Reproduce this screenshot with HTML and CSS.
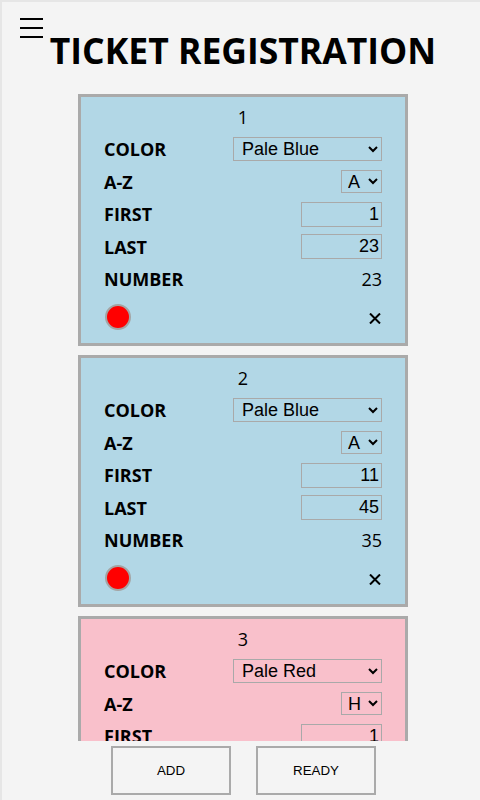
FILE: index.html
```html
<!DOCTYPE html>
<html lang="en">
<head>
<meta charset="utf-8">
<title>Ticket Registration</title>
<link rel="stylesheet" href="styles.css">
</head>
<body>
<div class="app">
  <header class="head">
    <button class="menu" aria-label="Menu">
      <svg width="23" height="20" viewBox="0 0 23 20"><rect x="0" y="0" width="23" height="2"/><rect x="0" y="9" width="23" height="2"/><rect x="0" y="18" width="23" height="2"/></svg>
    </button>
    <h1 class="title">TICKET REGISTRATION</h1>
  </header>
  <main class="list">
    <div class="card blue">
      <div class="num">1</div>
      <div class="row"><span class="label">COLOR</span><select class="sel sel-color"><option selected>Pale Blue</option><option>Pale Red</option></select></div>
      <div class="row"><span class="label">A-Z</span><select class="sel sel-az"><option selected>A</option><option>H</option></select></div>
      <div class="row"><span class="label">FIRST</span><input class="inp" type="text" value="1"></div>
      <div class="row"><span class="label">LAST</span><input class="inp" type="text" value="23"></div>
      <div class="row"><span class="label">NUMBER</span><span class="val">23</span></div>
      <div class="foot"><span class="dot"></span><svg class="close" width="12" height="11" viewBox="0 0 12 11"><path d="M1 0.5 L11 10.5 M11 0.5 L1 10.5" stroke="#000" stroke-width="2"/></svg></div>
    </div>
    <div class="card blue">
      <div class="num">2</div>
      <div class="row"><span class="label">COLOR</span><select class="sel sel-color"><option selected>Pale Blue</option><option>Pale Red</option></select></div>
      <div class="row"><span class="label">A-Z</span><select class="sel sel-az"><option selected>A</option><option>H</option></select></div>
      <div class="row"><span class="label">FIRST</span><input class="inp" type="text" value="11"></div>
      <div class="row"><span class="label">LAST</span><input class="inp" type="text" value="45"></div>
      <div class="row"><span class="label">NUMBER</span><span class="val">35</span></div>
      <div class="foot"><span class="dot"></span><svg class="close" width="12" height="11" viewBox="0 0 12 11"><path d="M1 0.5 L11 10.5 M11 0.5 L1 10.5" stroke="#000" stroke-width="2"/></svg></div>
    </div>
    <div class="card red">
      <div class="num">3</div>
      <div class="row"><span class="label">COLOR</span><select class="sel sel-color"><option>Pale Blue</option><option selected>Pale Red</option></select></div>
      <div class="row"><span class="label">A-Z</span><select class="sel sel-az"><option>A</option><option selected>H</option></select></div>
      <div class="row"><span class="label">FIRST</span><input class="inp" type="text" value="1"></div>
      <div class="row"><span class="label">LAST</span><input class="inp" type="text" value="10"></div>
      <div class="row"><span class="label">NUMBER</span><span class="val">10</span></div>
      <div class="foot"><span class="dot"></span><svg class="close" width="12" height="11" viewBox="0 0 12 11"><path d="M1 0.5 L11 10.5 M11 0.5 L1 10.5" stroke="#000" stroke-width="2"/></svg></div>
    </div>
  </main>
  <footer class="bar">
    <button class="btn">ADD</button>
    <button class="btn">READY</button>
  </footer>
</div>
</body>
</html>
```
FILE: styles.css
```css
html {
  background: #f4f4f4;
}
body {
  margin: 0;
  font-family: "Open Sans", "Noto Sans", sans-serif;
  color: #000;
}
.app {
  height: 100vh;
  box-sizing: border-box;
  border-top: 2px solid #e6e6e6;
  border-left: 2px solid #e6e6e6;
  display: flex;
  flex-direction: column;
  overflow: hidden;
}
.head {
  position: relative;
  flex: none;
  height: 72px;
  padding-left: 4px;
}
.menu {
  position: absolute;
  top: 16px;
  left: 18px;
  padding: 0;
  margin: 0;
  border: 0;
  background: none;
  line-height: 0;
}
.menu svg {
  fill: #000;
}
.title {
  margin: 0;
  padding-top: 26px;
  text-align: center;
  font-size: 35.5px;
  line-height: 44px;
  font-weight: 700;
}
.list {
  flex: 1;
  min-height: 0;
  overflow: hidden;
  display: flex;
  flex-direction: column;
  align-items: center;
  gap: 9px;
  padding: 20px 0 0 4px;
}
.card {
  flex: none;
  width: 330px;
  box-sizing: border-box;
  border: 3px solid #aaa;
  padding: 8px 23px 13.5px;
}
.blue {
  background: #b2d7e6;
}
.red {
  background: #f9c0cb;
}
.num {
  text-align: center;
  font-size: 18px;
  line-height: 25px;
  margin-bottom: 3px;
}
.row {
  display: flex;
  justify-content: space-between;
  align-items: center;
  height: 32.5px;
}
.label {
  font-weight: 700;
  font-size: 18px;
}
.val {
  font-size: 18px;
}
.sel {
  font-family: "Liberation Sans", Arial, sans-serif;
  font-size: 18px;
  background: transparent;
  border: 1px solid #a9a9a9;
  border-radius: 0;
  color: #000;
  margin: 0;
  box-sizing: border-box;
}
.sel-color {
  width: 149px;
  height: 24px;
  padding: 0 0 0 4px;
}
.sel-az {
  width: 41px;
  height: 23px;
  padding: 0 0 0 2px;
}
.inp {
  font-family: "Liberation Sans", Arial, sans-serif;
  font-size: 18px;
  width: 81px;
  height: 25px;
  box-sizing: border-box;
  border: 1px solid #a9a9a9;
  background: transparent;
  text-align: right;
  padding: 0 2px;
  margin: 0;
  color: #000;
}
.foot {
  display: flex;
  justify-content: space-between;
  align-items: center;
  padding-top: 8px;
}
.dot {
  width: 26px;
  height: 26px;
  box-sizing: border-box;
  border-radius: 50%;
  background: #f00;
  border: 2px solid #a4a4a4;
  margin-left: 1px;
}
.close {
  margin-top: 3px;
  margin-right: 1px;
}
.bar {
  flex: none;
  height: 59px;
  background: #f4f4f4;
  display: flex;
  justify-content: center;
  align-items: center;
  gap: 25px;
  padding-left: 5px;
  box-sizing: border-box;
}
.btn {
  width: 120px;
  height: 49px;
  border: 2px solid #aaa;
  background: #f4f4f4;
  font-family: "Liberation Sans", Arial, sans-serif;
  font-size: 13.333px;
  color: #000;
  padding: 0;
  margin: 0;
}
```
